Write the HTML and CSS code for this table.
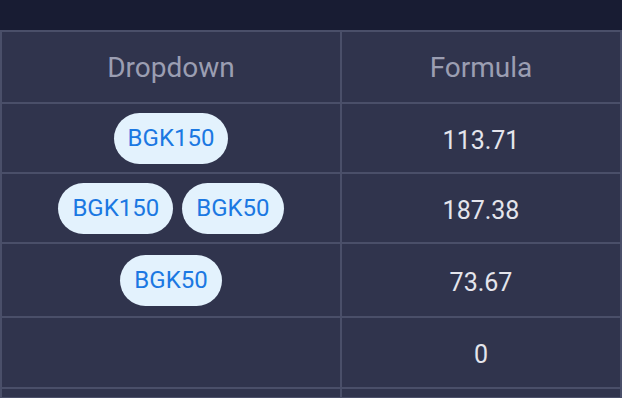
FILE: index.html
```html
<!DOCTYPE html>
<html>
<head>
<meta charset="utf-8">
<link rel="stylesheet" href="styles.css">
</head>
<body>
<div class="topbar"></div>
<div class="grid">
  <div class="cell head">Dropdown</div>
  <div class="cell head">Formula</div>

  <div class="cell r1"><span class="chip">BGK150</span></div>
  <div class="cell r1 val">113.71</div>

  <div class="cell r2"><span class="chip">BGK150</span><span class="chip">BGK50</span></div>
  <div class="cell r2 val">187.38</div>

  <div class="cell r3"><span class="chip">BGK50</span></div>
  <div class="cell r3 val">73.67</div>

  <div class="cell r4"></div>
  <div class="cell r4 val">0</div>

  <div class="cell r5"></div>
  <div class="cell r5"></div>
</div>
</body>
</html>
```
FILE: styles.css
```css
html, body {
  margin: 0;
  padding: 0;
  background: #181c33;
  overflow: hidden;
  font-family: Roboto, "Noto Sans", sans-serif;
}
.topbar {
  height: 30px;
}
.grid {
  display: grid;
  grid-template-columns: 338px 278px;
  gap: 2px;
  padding: 2px;
  background: #4a4f69;
  width: 622px;
  box-sizing: border-box;
}
.cell {
  background: #30344d;
  display: flex;
  align-items: center;
  justify-content: center;
  gap: 9px;
  box-sizing: border-box;
}
.head {
  height: 70px;
  color: #9b9eb2;
  font-size: 28px;
}
.r1, .r2 { height: 68px; }
.r3 { height: 72px; }
.r4 { height: 69px; }
.r5 { height: 8px; }
.val {
  color: #e4e5ec;
  font-size: 25px;
  padding-top: 4px;
}
.chip {
  background: #e3f2fd;
  color: #1b78e2;
  font-size: 24px;
  line-height: 27px;
  padding: 12px 14px;
  border-radius: 26px;
}
```
